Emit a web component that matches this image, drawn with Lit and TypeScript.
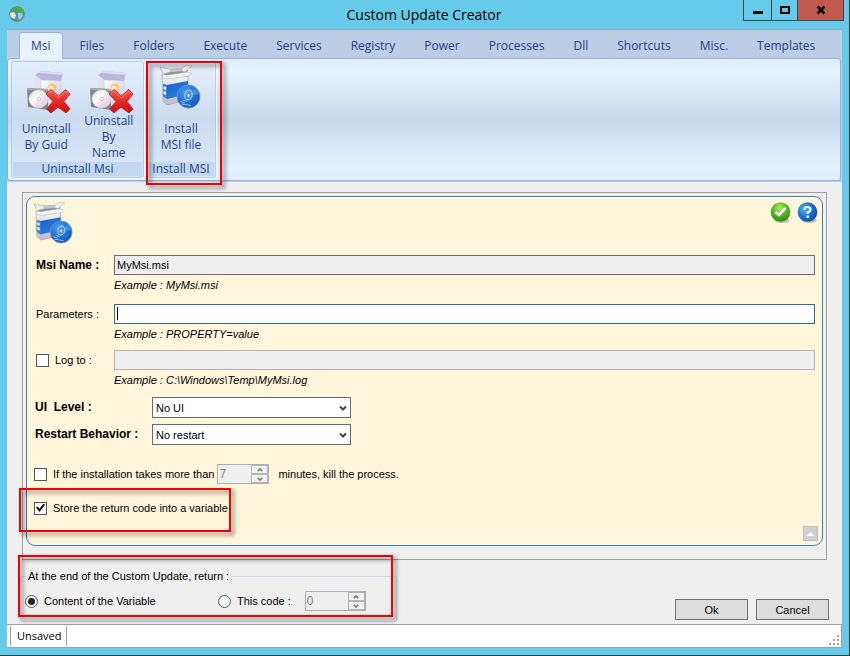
import { LitElement, html, svg, css } from "lit";
import { customElement, property } from "lit/decorators.js";

const boxIcon = html`<svg class="icon" viewBox="0 0 42 44" aria-hidden="true">
  <defs>
    <linearGradient id="face" x1="0" y1="0" x2="0" y2="1"><stop offset="0" stop-color="#fafafa"/><stop offset="1" stop-color="#b9bcc0"/></linearGradient>
    <linearGradient id="blue" x1="0" y1="0" x2="1" y2="1"><stop offset="0" stop-color="#1a5cc4"/><stop offset="1" stop-color="#2b83ea"/></linearGradient>
    <radialGradient id="disc" cx=".4" cy=".3" r=".8"><stop offset="0" stop-color="#4d9df2"/><stop offset=".5" stop-color="#2076dc"/><stop offset="1" stop-color="#1350ad"/></radialGradient>
  </defs>
  <path d="M2 10 28 8 28 35 7 40 3 36Z" fill="url(#face)" stroke="#9b9ea3" stroke-width=".6"/>
  <path d="M3 19 7 20 28 16 28 29 7 34 3 31Z" fill="url(#blue)"/>
  <path d="M3 19 7 20 7 34 3 31Z" fill="#3d82dc"/>
  <path d="M3.500 21.500 6 22V25L3.500 24ZM3.500 26 6 27V30L3.500 29Z" fill="#f1f6ff"/>
  <path d="M3 8 9 4 28 3 27 9 7 11Z" fill="#8b8d91"/>
  <path d="M9 4 28 3 26 6 11 7Z" fill="#c6c7ca"/>
  <path d="M3 9 0 2 10 4 11 7Z" fill="#ececed" stroke="#aaacb0" stroke-width=".6"/>
  <path d="M25 7 32 1 27 0 22 3 22 6Z" fill="#f6f6f6" stroke="#aaacb0" stroke-width=".6"/>
  <path d="M2 10 3 13 8 14 29 11 31 8 27 7 8 10Z" fill="#f5f5f6" stroke="#a3a5a9" stroke-width=".5"/>
  <circle cx="28.500" cy="31.500" r="11.500" fill="url(#disc)" stroke="#8492a5" stroke-width=".8"/>
  <path d="M28.500 31 36 23A11 11 0 0 1 39 29Z" fill="#83bdf6" opacity=".35"/>
  <ellipse cx="28.500" cy="30" rx="3.600" ry="4.800" fill="none" stroke="#a9cdf4" stroke-width="1.200" transform="rotate(15 28.500 30)"/>
  <ellipse cx="28.500" cy="30.500" rx="1.500" ry="2.200" fill="#d9dde2" stroke="#6f8299" stroke-width=".8"/>
  <path d="M20.500 36.500 25 38M21.500 39 31 40.500M23 35 27 36.500" stroke="#b5d6fa" stroke-width=".8"/>
</svg>`;

const removeIcon = html`<svg class="icon" viewBox="0 0 46 46" aria-hidden="true">
  <defs>
    <linearGradient id="side" x1="0" y1="0" x2="1" y2="1"><stop offset="0" stop-color="#fdfdff"/><stop offset="1" stop-color="#c6c5d8"/></linearGradient>
    <linearGradient id="cd" x1="0" y1="0" x2="1" y2="1"><stop offset="0" stop-color="#cfe8cd"/><stop offset=".4" stop-color="#fafafa"/><stop offset=".7" stop-color="#ecd6e8"/><stop offset="1" stop-color="#d2e3f2"/></linearGradient>
    <linearGradient id="cross" x1="0" y1="0" x2="0" y2="1"><stop offset="0" stop-color="#f5544c"/><stop offset=".5" stop-color="#ea2a28"/><stop offset="1" stop-color="#c5100f"/></linearGradient>
  </defs>
  <path d="M10 6 16 2 38 4 36 12 16 11Z" fill="#b9b5dd"/>
  <path d="M16 2 38 4 37 6 14 4Z" fill="#dedcf2"/>
  <path d="M10 6 16 11 17 40 10 34Z" fill="#e3e2ef"/>
  <path d="M16 11 36 12 36 40 17 40Z" fill="url(#side)" stroke="#cccbdf" stroke-width=".5"/>
  <circle cx="27" cy="19" r="4.500" fill="#f6c67c"/><circle cx="26" cy="19.500" r="2.500" fill="#fdeccb"/>
  <path d="M2 19 23 20 23 41 3 38Z" fill="#85868c"/>
  <path d="M2 19 23 20 23 22 2 21Z" fill="#a9aab0"/>
  <ellipse cx="13.500" cy="30" rx="9.500" ry="9" fill="url(#cd)" stroke="#dcdce0" stroke-width=".6"/>
  <circle cx="14" cy="30" r="1.800" fill="#fff" stroke="#b9bac2" stroke-width=".8"/>
  <path d="M21 25 26 20.500 33.500 27 40.500 20.500 45 25 39 32.500 45 40 41 44 33 38 26 44 21.500 40 28 32.500Z" fill="url(#cross)" stroke="#b8302d" stroke-width="1" stroke-linejoin="round"/>
  <path d="M22.500 25 26 22 33.500 29 40.500 22 43.500 25" fill="none" stroke="#ff9087" stroke-width=".9"/>
</svg>`;

const chevron = (up: boolean) => html`<svg viewBox="0 0 8 5" aria-hidden="true">
  ${up ? svg`<path d="M1 4 4 1 7 4"/>` : svg`<path d="M1 1 4 4 7 1"/>`}
</svg>`;

@customElement("number-spinner")
export class NumberSpinner extends LitElement {
  @property() value = "0";
  @property() label = "";

  static styles = css`
    :host { display: block; }
    .spin { display: flex; height: 20px; box-sizing: border-box; border: 1px solid #abadb3; background: #efefef; }
    input {
      flex: 1; min-width: 0; border: 0; padding: 0 1px; background: none; appearance: textfield;
      font: 12px "Liberation Sans", Arial, sans-serif; color: #838383;
    }
    input::-webkit-inner-spin-button { display: none; }
    .arrows { display: flex; flex-direction: column; width: 17px; }
    button {
      flex: 1; display: flex; align-items: center; justify-content: center; padding: 0;
      border: 1px solid #b4b4b4; background: #f0f0f0;
    }
    svg { width: 6px; height: 4px; fill: none; stroke: #777; stroke-width: 2; }
  `;

  render() {
    return html`<div class="spin">
      <input type="number" .value=${this.value} aria-label=${this.label} disabled>
      <div class="arrows">
        <button type="button" aria-label="Increase" disabled>${chevron(true)}</button>
        <button type="button" aria-label="Decrease" disabled>${chevron(false)}</button>
      </div>
    </div>`;
  }
}

const tabs = ["Msi", "Files", "Folders", "Execute", "Services", "Registry", "Power", "Processes", "Dll", "Shortcuts", "Misc.", "Templates"];

@customElement("app-root")
export class AppRoot extends LitElement {
  static styles = css`
    :host { display: block; font: 11px/16px "Liberation Sans", Arial, sans-serif; color: #000; }
    * { box-sizing: border-box; }
    button, input, select { font: inherit; color: inherit; margin: 0; }
    .window {
      min-height: 100vh; display: flex; flex-direction: column; background: #66caea;
      border-right: 1px solid #24414c; border-bottom: 1px solid #24414c;
    }

    .titlebar { display: grid; grid-template-columns: 1fr auto 1fr; height: 29px; padding: 0 5px 0 4px; }
    .globe { width: 16px; height: 16px; margin: 6px 0 0 5px; }
    h1 { margin: 0; font: 14px/29px "Open Sans", "Noto Sans", sans-serif; }
    .controls { display: flex; justify-content: flex-end; height: 21px; }
    .controls button {
      width: 27px; padding: 0; border: 1px solid #2b4a55; border-top: 0; margin-left: -1px;
      background: none; display: flex; align-items: center; justify-content: center;
    }
    .controls .minimize { width: 29px; }
    .controls .close { width: 47px; background: #c1594f; }
    .controls svg { width: 10px; height: 10px; }

    .client { flex: 1; display: flex; flex-direction: column; margin: 0 7px 7px; background: #efefef; }

    .ribbon {
      background: #bccde6; border-top: 1px solid #86a9bd; padding: 2px 1px 1px 0;
      font: 12px/16px "Open Sans", "Noto Sans", sans-serif; color: #1e3f8c;
    }
    .tabs { display: flex; padding-left: 12px; }
    .tabs button {
      height: 27px; padding: 0 14px 0 13px; border: 1px solid transparent; border-bottom: 0; background: none;
      margin-bottom: -1px; position: relative;
    }
    .tabs .active {
      padding: 0 11px; margin-right: 3px; background: #e8f1fc; border-color: #8db2e3; border-radius: 4px 4px 0 0;
      box-shadow: inset 0 0 2px #fff;
    }
    .groups {
      display: flex; gap: 2px; height: 123px; padding: 2px 3px; border: 1px solid #8db2e3; border-radius: 3px;
      background: linear-gradient(#e2edfb, #e8f3ff 10%, #dae7f6 28%, #c7d8ea 50%, #dfecfa 78%, #e2f0ff 90%, #e4edfb);
    }
    .group {
      position: relative; display: flex; flex-direction: column; height: 117px; padding: 1px;
      border: 1px solid #b5cbe6; border-radius: 3px; box-shadow: 1px 1px #f4f9ff;
      background: linear-gradient(#e3eefb, #dce9f8 20%, #cadcf0 48%, #dbe9f8);
    }
    .wide { width: 133px; }
    .narrow { width: 70px; }
    .actions { flex: 1; display: flex; }
    .wide .actions { padding: 0 2px; }
    .actions button {
      flex: 1; min-width: 0; padding: 6px 7px 1px; border: 0; background: none; display: flex; flex-direction: column; align-items: center;
    }
    .narrow .actions button { padding-top: 2px; }
    .actions .icon { flex: none; }
    .wide .icon { width: 46px; height: 46px; margin: 0 0 -2px 4px; }
    .narrow .icon { width: 42px; height: 44px; margin-bottom: 4px; }
    .actions span { flex: 1; display: flex; align-items: center; text-align: center; }
    .caption { height: 14px; line-height: 14px; background: #c1d8f0; text-align: center; white-space: nowrap; }

    .highlight {
      position: absolute; z-index: 2; border: 2px solid #f00000; pointer-events: none;
      filter: drop-shadow(3px 3px 2px rgba(0, 0, 0, .55));
    }
    .around-group { inset: -1px -7px -8px -1px; }
    .around-store { inset: -10px auto -14px -15px; width: 212px; }
    .around-return { inset: -29px 3px 4px -3px; }

    .main { padding: 10px 15px 0; }
    .panel { border: 1px solid #a0a0a0; padding: 3px 3px 13px; }
    .card { border: 1px solid #3f7fb5; border-radius: 9px; background: #fff6dc; padding: 5px 7px 4px; }
    .head { display: flex; gap: 6px; height: 44px; margin-right: -3px; }
    .head .icon { width: 40px; height: 42px; margin-right: auto; }
    .round { width: 21px; height: 22px; padding: 0; border: 0; background: none; }
    .round svg { display: block; width: 21px; height: 22px; }

    .field { display: grid; grid-template-columns: 80px 1fr; align-items: center; margin-top: 9px; }
    .field.tight { margin-top: 6px; }
    .field > label { padding-left: 2px; }
    .field .hint { grid-column: 2; line-height: 20px; font-style: italic; }
    .strong { font-size: 12px; font-weight: bold; }
    .box { position: relative; display: flex; }
    .box input { width: 100%; height: 20px; padding: 0 2px; border: 1px solid #6b6b6b; border-radius: 0; background: #efefef; outline: 0; }
    .box .editing { background: #fff; border-color: #2b6a98; }
    .box input:disabled { border-color: #b3b3b3; }
    .caret { position: absolute; left: 3px; top: 3px; width: 1px; height: 13px; background: #000; }

    .check { display: flex; align-items: center; gap: 6px; }
    input[type="checkbox"], input[type="radio"] {
      flex: none; appearance: none; width: 13px; height: 13px; border: 1px solid #555; background: #fff;
      display: grid; place-items: center;
    }
    input[type="radio"] { border-radius: 50%; }
    input[type="checkbox"]:checked::before {
      content: ""; width: 9px; height: 9px; background: #111;
      clip-path: polygon(0 45%, 18% 32%, 38% 58%, 84% 0, 100% 15%, 40% 95%);
    }
    input[type="radio"]:checked::before { content: ""; width: 7px; height: 7px; border-radius: 50%; background: #222; }

    .choices { display: grid; grid-template-columns: 118px 199px; row-gap: 6px; align-items: center; margin-top: 7px; }
    .choices label { padding-left: 1px; line-height: 14px; padding-bottom: 2px; }
    .select { display: grid; align-items: center; }
    .select select, .select svg { grid-area: 1 / 1; }
    .select select { appearance: none; height: 21px; padding: 0 3px; border: 1px solid #6b6b6b; border-radius: 0; background: #fff; }
    .select svg { justify-self: end; width: 8px; height: 6px; margin-right: 4px; fill: none; stroke: #444; stroke-width: 2; pointer-events: none; }

    .timeout { display: flex; align-items: center; gap: 9px; margin-top: 19px; }
    .timeout .check { margin-right: -6px; }
    .minutes { width: 52px; }
    .code { width: 61px; }
    .store { position: relative; display: flex; height: 20px; margin-top: 14px; }
    .fold { display: flex; justify-content: flex-end; margin: 8px -3px 0 0; }
    .fold button { width: 15px; height: 15px; padding: 0; border: 1px solid #bcbec2; background: #cfd0d3; display: grid; place-items: center; }
    .fold svg { width: 7px; height: 4px; fill: #fff; }

    .footer { display: flex; align-items: flex-end; justify-content: space-between; padding: 8px 13px 2px; }
    fieldset {
      position: relative; min-width: 0; width: 377px; margin: 0; padding: 7px 4px 10px; border: 1px solid #cfdae4; border-radius: 3px;
    }
    legend { margin-left: 1px; padding: 0 2px; line-height: 16px; }
    .radios { display: grid; grid-template-columns: 193px auto 1fr; align-items: center; height: 20px; }
    .radios .code { margin-left: 14px; }
    .buttons { display: flex; gap: 8px; padding-bottom: 2px; }
    .buttons button { width: 73px; height: 21px; padding: 0; border: 1px solid #707070; background: #dddddd; }

    .status {
      display: flex; justify-content: space-between; align-items: stretch; height: 24px; margin-top: auto; padding: 1px 1px 1px 3px;
      background: #fff; border: 1px solid #a0a0a0; border-left: 0; font: 11px/20px "Open Sans", "Noto Sans", sans-serif;
    }
    .status span { padding: 0 4px 0 6px; border: solid #a0a0a0; border-width: 0 1px; }
    .grip { align-self: flex-end; width: 11px; height: 11px; fill: #a0a0a0; }
  `;

  render() {
    return html`
      <div class="window">
        <header class="titlebar">
          <svg class="globe" viewBox="0 0 16 16" aria-hidden="true">
            <circle cx="8" cy="8" r="7.500" fill="#4b91ad" stroke="#6a7a78" stroke-width=".6"/>
            <path d="M1 6Q4 0 10 1L15 4 14 8 8 6 10 4Q6 3 3 8Z" fill="#53ad3b"/>
            <path d="M1 7 5 6 7 9 6 13Q1 12 1 8Z" fill="#ece6d8"/>
            <path d="M9 7 13 7 14 10 11 14 9 12Z" fill="#8fd0ec"/>
            <path d="M4 13Q8 12 11 14Q8 16 4 13Z" fill="#a87b49"/>
          </svg>
          <h1>Custom Update Creator</h1>
          <div class="controls">
            <button class="minimize" aria-label="Minimize"><svg viewBox="0 0 10 10"><path d="M0 6H10V9H0Z"/></svg></button>
            <button aria-label="Maximize"><svg viewBox="0 0 10 10"><path d="M1 2H9V8H1Z" fill="none" stroke="#000" stroke-width="2"/></svg></button>
            <button class="close" aria-label="Close"><svg viewBox="0 0 10 10"><path d="M1.500 1.500 8.500 8.500M8.500 1.500 1.500 8.500" stroke="#000" stroke-width="2.500"/></svg></button>
          </div>
        </header>

        <div class="client">
          <div class="ribbon">
            <nav class="tabs">
              ${tabs.map((t, i) => html`<button class=${i === 0 ? "active" : ""}>${t}</button>`)}
            </nav>
            <div class="groups">
              <div class="group wide">
                <div class="actions">
                  <button>${removeIcon}<span>Uninstall By Guid</span></button>
                  <button>${removeIcon}<span>Uninstall By Name</span></button>
                </div>
                <div class="caption">Uninstall Msi</div>
              </div>
              <div class="group narrow">
                <div class="actions">
                  <button>${boxIcon}<span>Install MSI file</span></button>
                </div>
                <div class="caption">Install MSI</div>
                <i class="highlight around-group"></i>
              </div>
            </div>
          </div>

          <main class="main">
            <div class="panel">
              <form class="card">
                <div class="head">
                  ${boxIcon}
                  <button type="button" class="round" aria-label="Validate">
                    <svg viewBox="0 0 21 22">
                      <defs><radialGradient id="g" cx=".45" cy=".3" r=".7"><stop offset="0" stop-color="#b8ea5a"/><stop offset=".5" stop-color="#55bb25"/><stop offset="1" stop-color="#2a8a15"/></radialGradient></defs>
                      <ellipse cx="12" cy="18.500" rx="7.500" ry="2.500" fill="#8a8672" opacity=".5"/>
                      <circle cx="10.500" cy="10" r="9.800" fill="url(#g)"/>
                      <path d="M5.500 10 9 13 15.500 6" fill="none" stroke="#fff" stroke-width="2.600"/>
                    </svg>
                  </button>
                  <button type="button" class="round" aria-label="Help">
                    <svg viewBox="0 0 21 22">
                      <defs><radialGradient id="b" cx=".35" cy=".35" r=".7"><stop offset="0" stop-color="#58b4f2"/><stop offset=".5" stop-color="#1c78d8"/><stop offset="1" stop-color="#0b4bab"/></radialGradient></defs>
                      <ellipse cx="12" cy="18.500" rx="7.500" ry="2.500" fill="#8a8672" opacity=".5"/>
                      <circle cx="10.500" cy="10" r="9.800" fill="url(#b)"/>
                      <path d="M7.500 7.500Q7.500 5 10.500 5T13.500 7.500Q13.500 9 10.800 10.500V12" fill="none" stroke="#fff" stroke-width="2.200"/>
                      <path d="M9.500 13.500H12V16H9.500Z" fill="#fff"/>
                    </svg>
                  </button>
                </div>

                <div class="field">
                  <label class="strong" for="name">Msi Name :</label>
                  <div class="box"><input id="name" type="text" value="MyMsi.msi" readonly></div>
                  <div class="hint">Example : MyMsi.msi</div>
                </div>
                <div class="field">
                  <label for="params">Parameters :</label>
                  <div class="box"><input id="params" class="editing" type="text"><i class="caret"></i></div>
                  <div class="hint">Example : PROPERTY=value</div>
                </div>
                <div class="field tight">
                  <label class="check"><input type="checkbox">Log to :</label>
                  <div class="box"><input type="text" aria-label="Log file" disabled></div>
                  <div class="hint">Example : C:\\Windows\\Temp\\MyMsi.log</div>
                </div>

                <div class="choices">
                  <label class="strong" for="ui">UI&nbsp; Level :</label>
                  <div class="select"><select id="ui"><option>No UI</option></select>${chevron(false)}</div>
                  <label class="strong" for="restart">Restart Behavior :</label>
                  <div class="select"><select id="restart"><option>No restart</option></select>${chevron(false)}</div>
                </div>

                <div class="timeout">
                  <label class="check"><input type="checkbox">If the installation takes more than</label>
                  <number-spinner class="minutes" value="7" label="Minutes"></number-spinner>
                  <span>minutes, kill the process.</span>
                </div>
                <div class="store">
                  <label class="check"><input type="checkbox" checked>Store the return code into a variable</label>
                  <i class="highlight around-store"></i>
                </div>
                <div class="fold">
                  <button type="button" aria-label="Collapse"><svg viewBox="0 0 7 4"><path d="M0 4 3.500 0 7 4Z"/></svg></button>
                </div>
              </form>
            </div>
          </main>

          <div class="footer">
            <fieldset>
              <legend>At the end of the Custom Update, return :</legend>
              <div class="radios">
                <label class="check"><input type="radio" name="ret" checked>Content of the Variable</label>
                <label class="check"><input type="radio" name="ret">This code :</label>
                <number-spinner class="code" value="0" label="Return code"></number-spinner>
              </div>
              <i class="highlight around-return"></i>
            </fieldset>
            <div class="buttons"><button>Ok</button><button>Cancel</button></div>
          </div>

          <div class="status">
            <span>Unsaved</span>
            <svg class="grip" viewBox="0 0 11 11" aria-hidden="true"><path d="M8 0h2v2h-2zM8 4h2v2h-2zM4 4h2v2h-2zM8 8h2v2h-2zM4 8h2v2h-2zM0 8h2v2h-2z"/></svg>
          </div>
        </div>
      </div>
    `;
  }
}
